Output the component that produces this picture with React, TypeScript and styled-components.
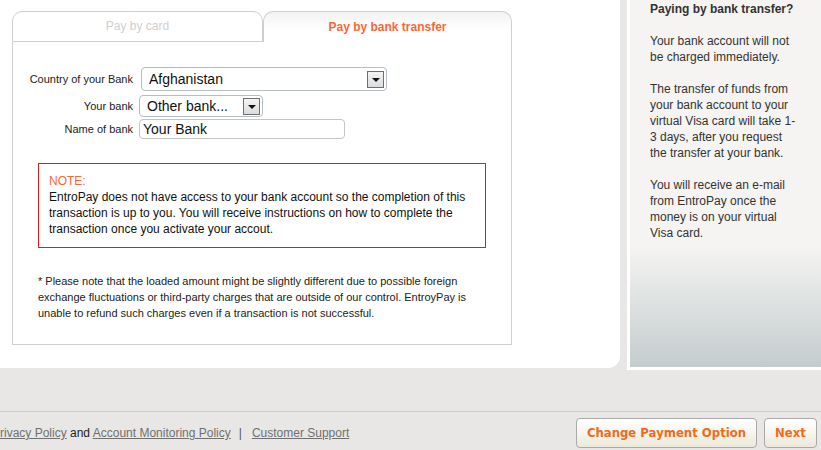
import React from "react";
import styled, { createGlobalStyle } from "styled-components";

const Global = createGlobalStyle`
  html, body { margin: 0; padding: 0; }
  body {
    background: #e8e7e5;
    font-family: "Liberation Sans", Arial, sans-serif;
    width: 821px;
    height: 450px;
    overflow: hidden;
  }
`;

const Page = styled.div`
  display: flex;
  flex-direction: column;
  width: 821px;
  height: 450px;
`;

const Top = styled.div`
  display: flex;
  align-items: flex-start;
  height: 370px;
`;

const MainPanel = styled.div`
  width: 620px;
  height: 368px;
  background: #fff;
  border-bottom-right-radius: 12px;
  padding: 11px 0 0 12px;
  box-sizing: border-box;
`;

const TabBox = styled.div`
  width: 500px;
`;

const TabRow = styled.div`
  display: flex;
  height: 30px;
`;

const Tab = styled.div<{ $active?: boolean }>`
  box-sizing: border-box;
  width: ${(p) => (p.$active ? 249 : 251)}px;
  height: 31px;
  border: 1px solid #cfcfcf;
  border-bottom: ${(p) => (p.$active ? "none" : "1px solid #cfcfcf")};
  border-radius: 10px 10px 0 0;
  background: ${(p) =>
    p.$active ? "linear-gradient(to bottom, #f2f2f2 0%, #ffffff 60%)" : "#fff"};
  display: flex;
  align-items: center;
  justify-content: center;
  font-size: 12px;
  font-weight: ${(p) => (p.$active ? "bold" : "normal")};
  color: ${(p) => (p.$active ? "#ff6633" : "#cfcfcf")};
  padding-bottom: 1px;
`;

const TabBody = styled.div`
  box-sizing: border-box;
  height: 303px;
  border: 1px solid #cfcfcf;
  border-top: none;
  padding: 25px 0 0 0;
  margin-top: 1px;
`;

const FormGrid = styled.div`
  display: grid;
  grid-template-columns: 120px auto;
  column-gap: 6px;
  align-items: center;
`;

const Label = styled.div<{ $mt?: number }>`
  font-size: 11px;
  color: #222;
  text-align: right;
  margin-top: ${(p) => p.$mt || 0}px;
`;

const Field = styled.div<{ $mt?: number }>`
  display: flex;
  margin-top: ${(p) => p.$mt || 0}px;
`;

const SelectBox = styled.div<{ $w: number; $h: number; $ml?: number }>`
  box-sizing: border-box;
  width: ${(p) => p.$w}px;
  height: ${(p) => p.$h}px;
  margin-left: ${(p) => p.$ml || 0}px;
  border: 1px solid #b4bcc6;
  border-radius: 4px;
  display: flex;
  align-items: center;
  justify-content: space-between;
  padding: 0 2px 0 7px;
  font-size: 14px;
  color: #111;
  background: #fff;
`;

const ArrowBtn = styled.div`
  box-sizing: border-box;
  width: 17px;
  height: 17px;
  border: 1px solid #6f6f6f;
  background: linear-gradient(to bottom, #f4f4f4, #dcdcdc);
  display: flex;
  align-items: center;
  justify-content: center;
`;

const Triangle = styled.div`
  width: 0;
  height: 0;
  border-left: 4px solid transparent;
  border-right: 4px solid transparent;
  border-top: 4px solid #111;
  margin-top: 2px;
`;

const TextInput = styled.div`
  box-sizing: border-box;
  width: 206px;
  height: 20px;
  border: 1px solid #c4c4c4;
  border-radius: 4px;
  font-size: 14px;
  color: #111;
  padding: 0 3px;
  display: flex;
  align-items: center;
`;

const NoteBox = styled.div`
  box-sizing: border-box;
  width: 448px;
  height: 85px;
  margin: 24px 0 0 25px;
  border: 1px solid #e81818;
  padding: 9px 10px 0 10px;
  font-size: 12px;
  line-height: 16px;
  color: #111;
`;

const NoteTitle = styled.div`
  color: #ff6633;
`;

const Footnote = styled.p`
  margin: 25px 0 0 25px;
  width: 445px;
  font-size: 11px;
  line-height: 16px;
  color: #222;
`;

const Sidebar = styled.div`
  box-sizing: border-box;
  width: 194px;
  height: 370px;
  margin-left: 7px;
  border-left: 3px solid #fff;
  border-bottom: 3px solid #fff;
  background: linear-gradient(to bottom, #f5f4f2 0%, #f5f4f2 67%, #c4ccce 100%);
  padding: 1px 0 0 20px;
  font-size: 12px;
  line-height: 16px;
  color: #333;
`;

const SideTitle = styled.div`
  font-weight: bold;
`;

const SideText = styled.p`
  margin: 16px 0 0 0;
  width: 150px;
`;

const Footer = styled.div`
  margin-top: 41px;
  border-top: 1px solid #cdcccb;
  display: flex;
  justify-content: space-between;
  align-items: flex-start;
  padding: 6px 4px 0 0;
`;

const Links = styled.div`
  margin-left: -8px;
  margin-top: 8px;
  font-size: 12px;
  color: #222;
  white-space: nowrap;
`;

const Link = styled.a`
  color: #707070;
  text-decoration: underline;
`;

const Sep = styled.span`
  color: #555;
  margin: 0 10px 0 8px;
`;

const Buttons = styled.div`
  display: flex;
  gap: 7px;
`;

const Button = styled.div<{ $w: number }>`
  box-sizing: border-box;
  width: ${(p) => p.$w}px;
  height: 30px;
  border: 1px solid #a9a9a9;
  border-radius: 4px;
  background: linear-gradient(to bottom, #ffffff 0%, #f6f5ee 50%, #ebe9d9 100%);
  display: flex;
  align-items: center;
  justify-content: center;
  font-family: "DejaVu Sans", Verdana, sans-serif;
  font-weight: bold;
  font-size: 11.7px;
  color: #f26a1b;
`;

const Select = ({ w, h, ml, value }: { w: number; h: number; ml?: number; value: string }) => (
  <SelectBox $w={w} $h={h} $ml={ml}>
    <span>{value}</span>
    <ArrowBtn>
      <Triangle />
    </ArrowBtn>
  </SelectBox>
);

export default function App() {
  return (
    <Page>
      <Global />
      <Top>
        <MainPanel>
          <TabBox>
            <TabRow>
              <Tab>Pay by card</Tab>
              <Tab $active>Pay by bank transfer</Tab>
            </TabRow>
            <TabBody>
              <FormGrid>
                <Label>Country of your Bank</Label>
                <Field>
                  <Select w={246} h={24} ml={2} value="Afghanistan" />
                </Field>
                <Label $mt={4}>Your bank</Label>
                <Field $mt={4}>
                  <Select w={124} h={22} value="Other bank..." />
                </Field>
                <Label $mt={2}>Name of bank</Label>
                <Field $mt={2}>
                  <TextInput>Your Bank</TextInput>
                </Field>
              </FormGrid>
              <NoteBox>
                <NoteTitle>NOTE:</NoteTitle>
                EntroPay does not have access to your bank account so the completion of this
                transaction is up to you. You will receive instructions on how to complete the
                transaction once you activate your accout.
              </NoteBox>
              <Footnote>
                * Please note that the loaded amount might be slightly different due to possible
                foreign exchange fluctuations or third-party charges that are outside of our
                control. EntroyPay is unable to refund such charges even if a transaction is not
                successful.
              </Footnote>
            </TabBody>
          </TabBox>
        </MainPanel>
        <Sidebar>
          <SideTitle>Paying by bank transfer?</SideTitle>
          <SideText>Your bank account will not be charged immediately.</SideText>
          <SideText>
            The transfer of funds from your bank account to your virtual Visa card will take 1-
            <br />3 days, after you request the transfer at your bank.
          </SideText>
          <SideText>
            You will receive an e-mail from EntroPay once the money is on your virtual Visa card.
          </SideText>
        </Sidebar>
      </Top>
      <Footer>
        <Links>
          <Link>Privacy Policy</Link> and <Link>Account Monitoring Policy</Link>
          <Sep>|</Sep>
          <Link>Customer Support</Link>
        </Links>
        <Buttons>
          <Button $w={181}>Change Payment Option</Button>
          <Button $w={53}>Next</Button>
        </Buttons>
      </Footer>
    </Page>
  );
}
